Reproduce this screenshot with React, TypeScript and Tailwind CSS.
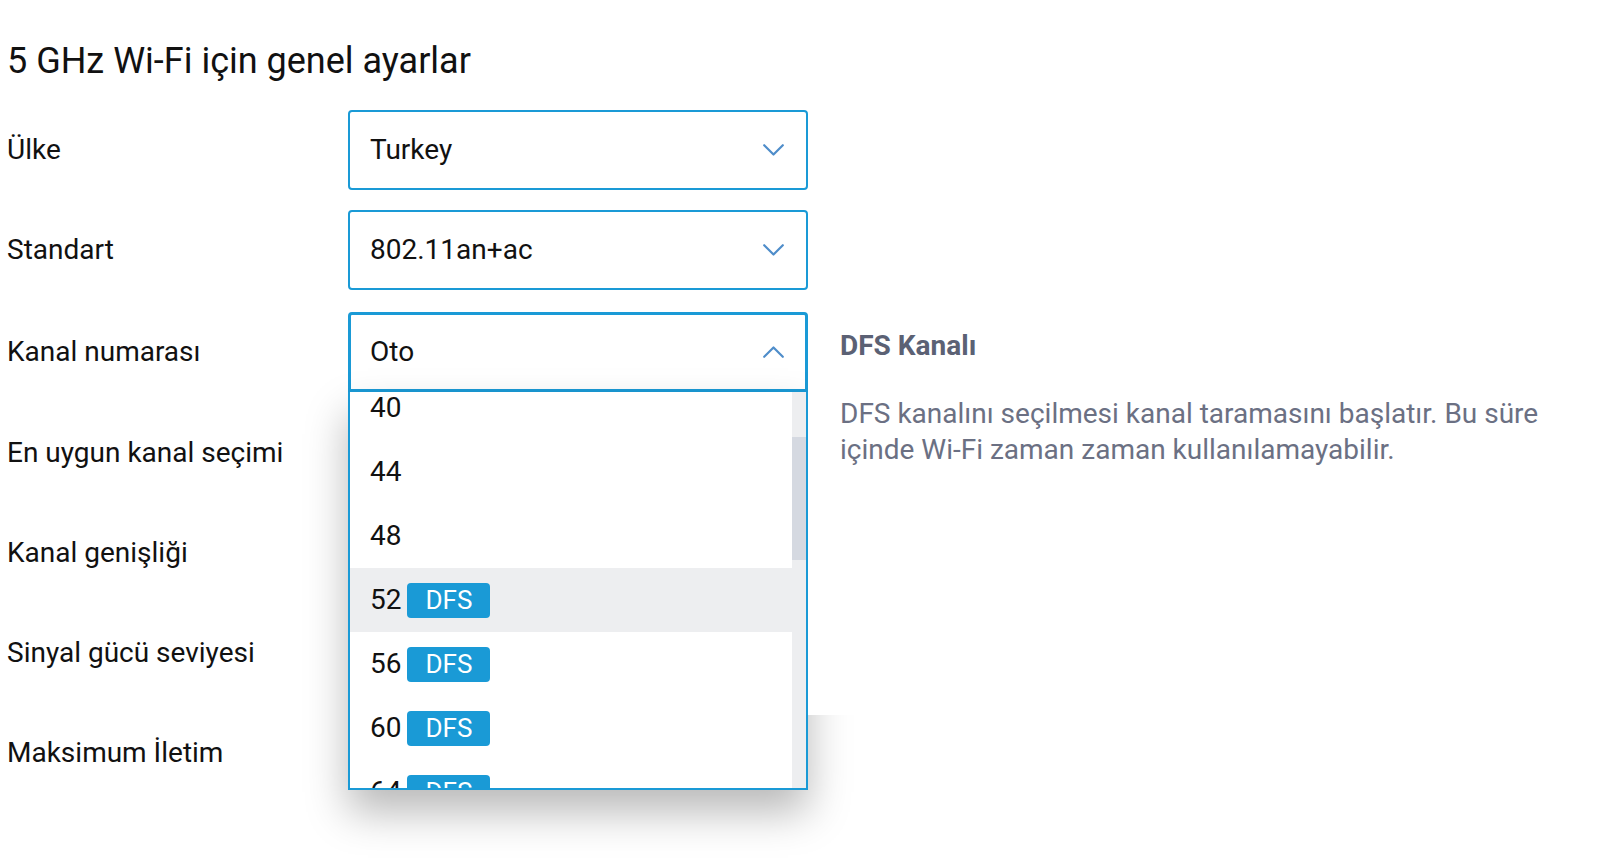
import React from "react";

const Chevron = ({ up = false }: { up?: boolean }) => (
  <svg width="21" height="12" viewBox="0 0 21 12" fill="none">
    <path
      d={up ? "M1.2 10.8 L10.5 1.5 L19.8 10.8" : "M1.2 1.2 L10.5 10.5 L19.8 1.2"}
      stroke="#4f8dca"
      strokeWidth="2.2"
      strokeLinecap="round"
      strokeLinejoin="round"
    />
  </svg>
);

const Select = ({ value }: { value: string }) => (
  <div className="w-[460px] h-20 border-2 border-[#1a9ad6] rounded-[4px] bg-white flex items-center justify-between pl-5 pr-[22px] text-[28px]">
    <span>{value}</span>
    <Chevron />
  </div>
);

const items: { n: string; dfs: boolean }[] = [
  { n: "40", dfs: false },
  { n: "44", dfs: false },
  { n: "48", dfs: false },
  { n: "52", dfs: true },
  { n: "56", dfs: true },
  { n: "60", dfs: true },
  { n: "64", dfs: true },
];

export default function App() {
  return (
    <div className="min-h-[866px] bg-white font-['Roboto',sans-serif] text-[#111111] pl-[7px] pt-10">
      <h1 className="text-[36px] leading-[42px] font-normal">5 GHz Wi-Fi için genel ayarlar</h1>
      <div className="flex flex-col gap-5 mt-7">
        <div className="flex items-center h-20">
          <div className="w-[341px] text-[28px]">Ülke</div>
          <Select value="Turkey" />
        </div>
        <div className="flex items-center h-20">
          <div className="w-[341px] text-[28px]">Standart</div>
          <Select value="802.11an+ac" />
        </div>
        <div className="flex items-center h-20 mt-[2px]">
          <div className="w-[341px] text-[28px]">Kanal numarası</div>
          <div className="relative w-[460px] h-20">
            <div className="w-full h-20 border-[3px] border-[#1a9ad6] rounded-t-[4px] bg-white flex items-center justify-between pl-[19px] pr-[21px] text-[28px]">
              <span>Oto</span>
              <Chevron up />
            </div>
            <div className="absolute top-full left-0 z-10 w-[460px] h-[398px] border-2 border-t-0 border-[#1a9ad6] bg-white shadow-[0_22px_40px_rgba(0,0,0,0.28)] flex">
              <div className="flex-1 overflow-hidden">
                <div className="-mt-[16px]">
                  {items.map((it) => (
                    <div
                      key={it.n}
                      className={`h-16 flex items-center gap-[6px] pl-5 text-[28px] ${it.n === "52" ? "bg-[#edeef0]" : "bg-white"}`}
                    >
                      <span>{it.n}</span>
                      {it.dfs && (
                        <span className="h-[35px] px-[18px] rounded-[4px] bg-[#1a9ad6] text-white text-[26px] leading-none flex items-center">
                          DFS
                        </span>
                      )}
                    </div>
                  ))}
                </div>
              </div>
              <div className="w-[14px] bg-[#edeef0] pt-[45px]">
                <div className="h-[123px] bg-[#d5d9e1]" />
              </div>
            </div>
            <div className="absolute left-full top-0 z-20 w-[800px] h-[403px] bg-white pl-8 pt-4">
              <div className="text-[28px] leading-9 font-bold text-[#5b6174]">DFS Kanalı</div>
              <p className="mt-8 w-[740px] text-[28px] leading-9 text-[#6b7083]">
                DFS kanalını seçilmesi kanal taramasını başlatır. Bu süre içinde Wi-Fi zaman zaman kullanılamayabilir.
              </p>
            </div>
          </div>
        </div>
        <div className="flex items-center h-20 mt-px">
          <div className="w-[341px] text-[28px]">En uygun kanal seçimi</div>
        </div>
        <div className="flex items-center h-20">
          <div className="w-[341px] text-[28px]">Kanal genişliği</div>
        </div>
        <div className="flex items-center h-20">
          <div className="w-[341px] text-[28px]">Sinyal gücü seviyesi</div>
        </div>
        <div className="flex items-center h-20">
          <div className="w-[341px] text-[28px]">Maksimum İletim</div>
        </div>
      </div>
    </div>
  );
}
